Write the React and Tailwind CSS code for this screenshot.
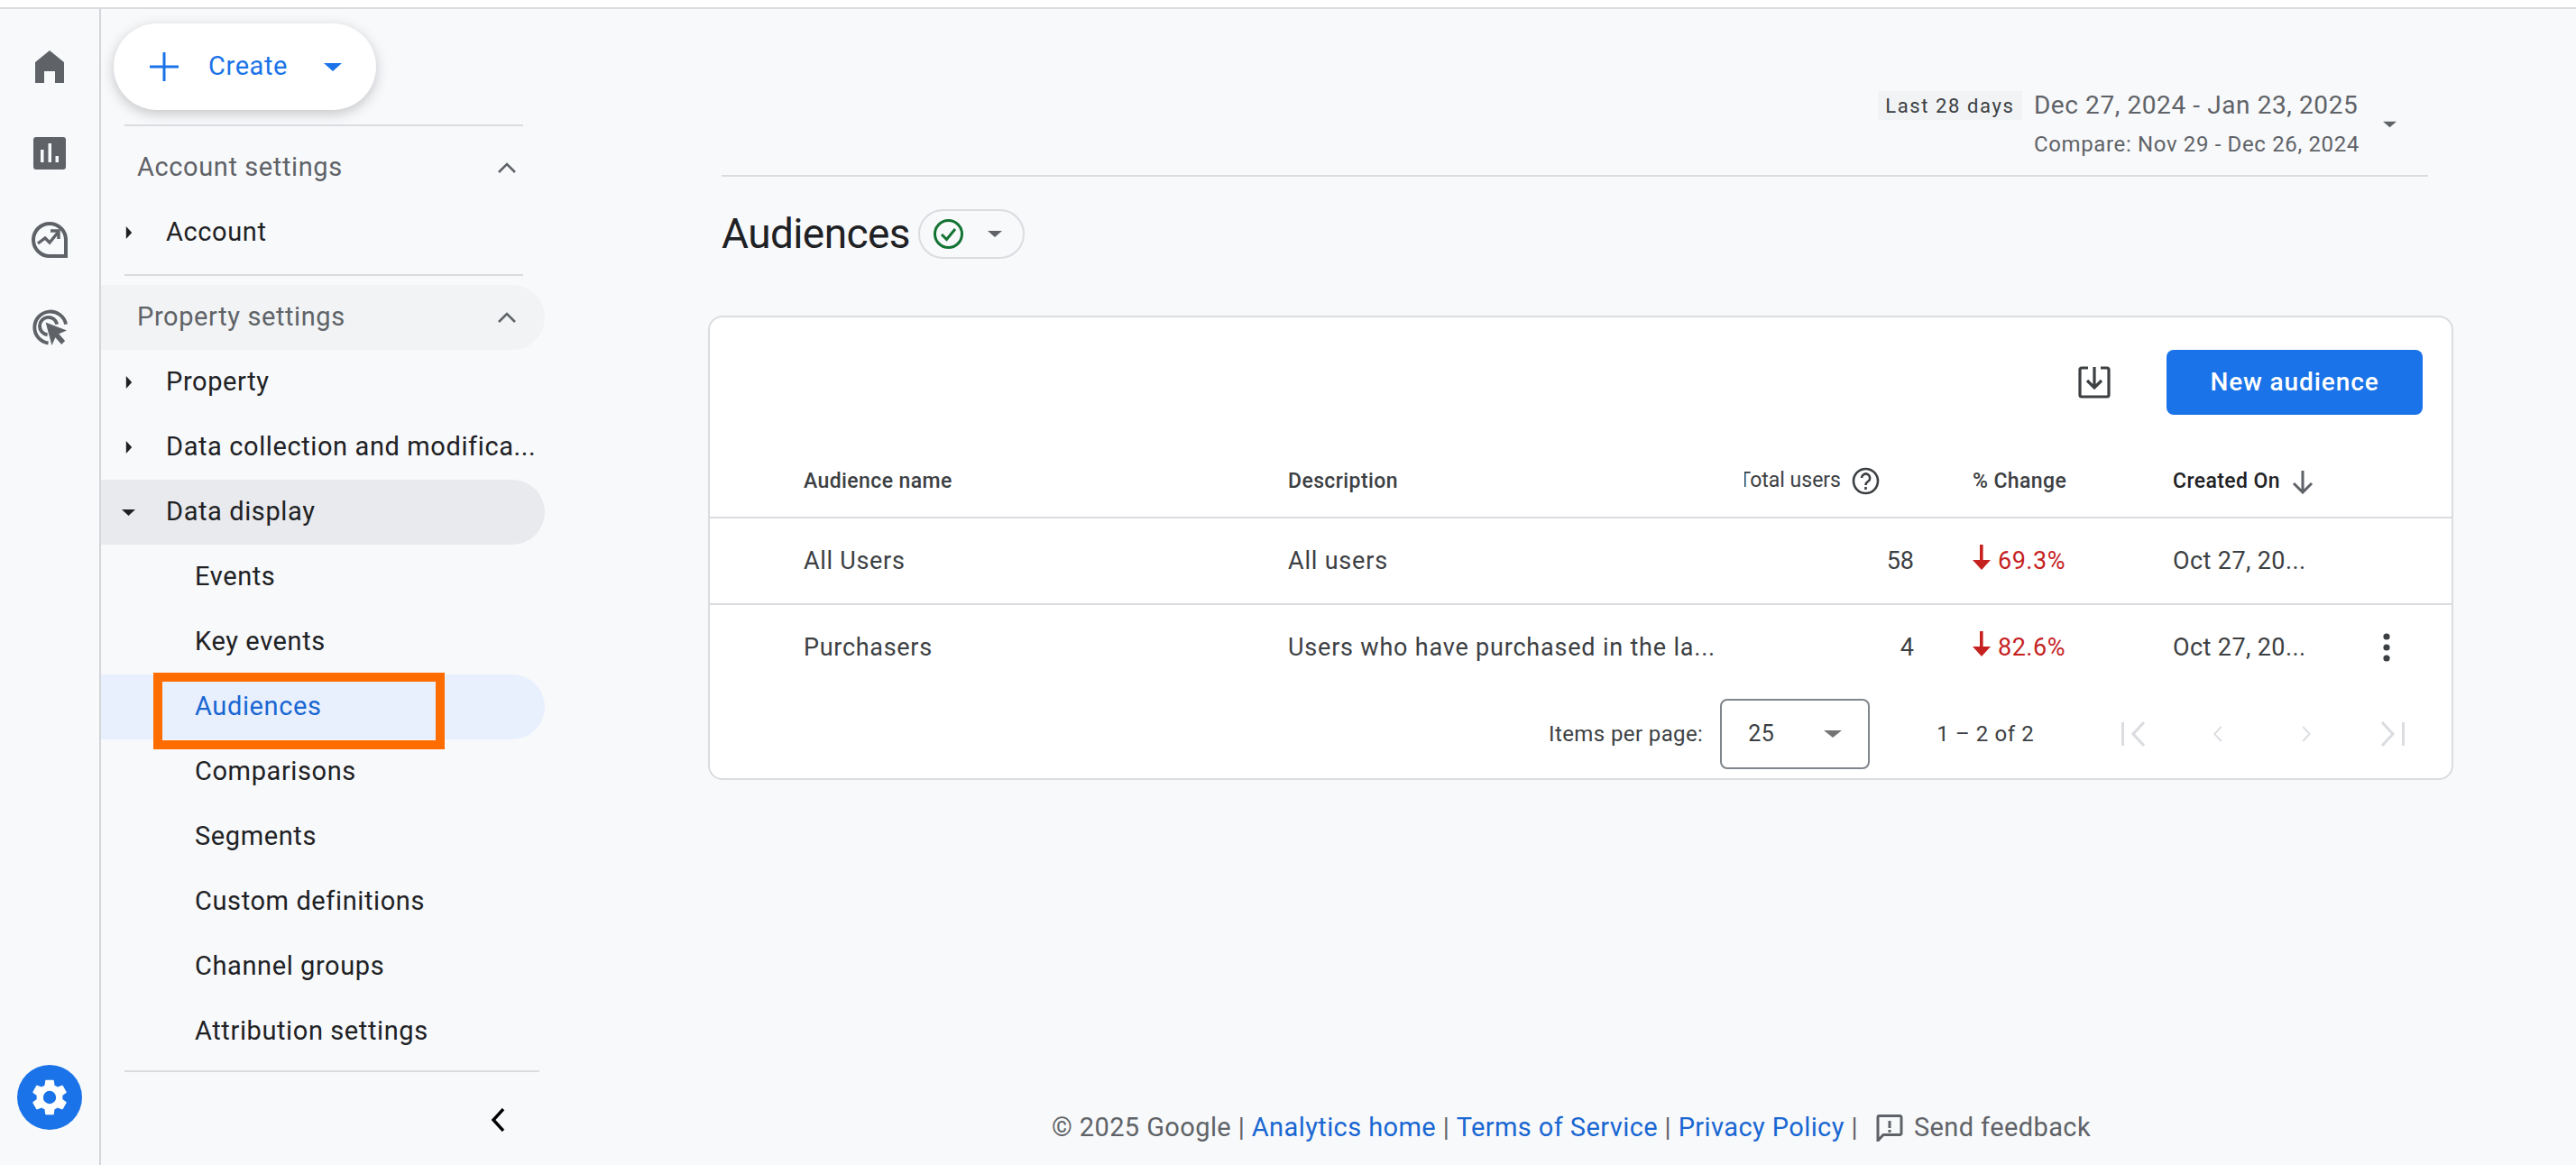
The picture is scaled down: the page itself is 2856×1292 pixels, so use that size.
import React from "react";

const Caret = ({ dir = "down", className = "" }) => (
  <svg viewBox="0 0 10 10" className={className} preserveAspectRatio="none" fill="currentColor">
    {dir === "down" ? <path d="M0 1h10L5 9z" /> : <path d="M1 0l8 5-8 5z" />}
  </svg>
);

const HomeIcon = () => (
  <svg viewBox="0 0 32 36" className="w-8 h-9 text-[#5f6368]" fill="currentColor">
    <path d="M0 36V13L16 0l16 13v23H22V23H10v13z" />
  </svg>
);
const ReportsIcon = () => (
  <svg viewBox="0 0 36 36" className="w-9 h-9 text-[#5f6368]" fill="currentColor">
    <path fillRule="evenodd" d="M3 0h30a3 3 0 0 1 3 3v30a3 3 0 0 1-3 3H3a3 3 0 0 1-3-3V3a3 3 0 0 1 3-3zM8 14v14h3.5V14zm8.5-7v21H20V7zm8 14v7H28v-7z" />
  </svg>
);
const ExploreIcon = () => (
  <svg viewBox="0 0 40 40" className="w-10 h-10 text-[#5f6368]" fill="none" stroke="currentColor">
    <path d="M38 24V20A18 18 0 1 0 20 38h18V24" strokeWidth="4" />
    <path d="M7 24l8-6 5 5 9-11" strokeWidth="3.4" />
    <path d="M21 10h9v9" strokeWidth="3.4" />
    <circle cx="34" cy="34" r="1.6" fill="#f8f9fb" stroke="none" />
  </svg>
);
const AdsIcon = () => (
  <svg viewBox="0 0 42 42" className="w-[41px] h-[41px] text-[#5f6368]" fill="none" stroke="currentColor">
    <path d="M19 39.5A18 18 0 1 1 39 18" strokeWidth="4" />
    <path d="M18 30a10 10 0 1 1 11-12" strokeWidth="4" />
    <path d="M16 16l24 9-9 4 7 8-4 4-7-8-4 9z" fill="currentColor" stroke="none" />
  </svg>
);
const Gear = () => (
  <svg viewBox="0 0 24 24" className="w-12 h-12 text-white" fill="currentColor">
    <path d="M19.14 12.94c.04-.3.06-.61.06-.94 0-.32-.02-.64-.07-.94l2.03-1.58a.49.49 0 0 0 .12-.61l-1.92-3.32a.49.49 0 0 0-.59-.22l-2.39.96c-.5-.38-1.03-.7-1.62-.94l-.36-2.54a.48.48 0 0 0-.48-.41h-3.84a.48.48 0 0 0-.47.41l-.36 2.54c-.59.24-1.13.57-1.62.94l-2.39-.96a.49.49 0 0 0-.59.22L2.74 8.87c-.12.21-.08.47.12.61l2.03 1.58c-.05.3-.09.63-.09.94s.02.64.07.94l-2.03 1.58a.49.49 0 0 0-.12.61l1.92 3.32c.12.22.37.29.59.22l2.39-.96c.5.38 1.03.7 1.62.94l.36 2.54c.05.24.24.41.48.41h3.84c.24 0 .44-.17.47-.41l.36-2.54c.59-.24 1.13-.56 1.62-.94l2.39.96c.22.08.47 0 .59-.22l1.92-3.32c.12-.22.07-.47-.12-.61l-2.01-1.58zM12 15.6A3.6 3.6 0 1 1 12 8.4a3.6 3.6 0 0 1 0 7.2z" />
  </svg>
);

const NavRow = ({ label, caret, sub, active, open, header, children }) => (
  <div
    className={
      "relative h-[72px] w-[492px] flex items-center rounded-r-[36px] text-[29px] tracking-[0.6px] " +
      (active ? "bg-[#e8f0fe] text-[#1967d2] " : open ? "bg-[#e8eaed] text-[#202124] " : header ? "text-[#5f6368] " : "text-[#202124] ")
    }
  >
    {caret === "right" && <Caret dir="right" className="absolute left-[27px] top-[29px] w-[8px] h-[14px] text-[#202124]" />}
    {caret === "down" && <Caret className="absolute left-[23px] top-[32px] w-[15px] h-[9px] text-[#202124]" />}
    <span className={"whitespace-nowrap " + (sub ? "ml-[104px]" : header ? "ml-[40px]" : "ml-[72px]")}>{label}</span>
    {children}
  </div>
);

const Chevron = () => (
  <svg viewBox="0 0 20 12" className="absolute left-[440px] top-[30px] w-5 h-3 text-[#5f6368]" fill="none" stroke="currentColor" strokeWidth="2.6">
    <path d="M1 11l9-9 9 9" />
  </svg>
);

const Rule = ({ className }) => <div className={"h-[2px] bg-[#dadce0] " + className} />;

const PageIcon = ({ d, className }) => (
  <svg viewBox="0 0 26 28" className={"h-7 text-[#dadce0] " + className} fill="none" stroke="currentColor" strokeWidth="3">
    <path d={d} />
  </svg>
);

const Cols = "grid grid-cols-[537px_506px_253px_222px_1fr] pl-[104px] items-center";

const Down = () => (
  <svg viewBox="0 0 20 28" className="w-5 h-7 text-[#c5221f]" fill="currentColor">
    <path d="M8 0h3.6v17H20L10 28 0 17h8z" />
  </svg>
);

const DataRow = ({ name, desc, total, pct, kebab, line }) => (
  <div className={Cols + " text-[27px] text-[#3c4043] " + (line ? "h-[96px] border-b-2 border-[#dadce0]" : "h-[94px]")}>
    <div className="tracking-[0.7px]">{name}</div>
    <div className="tracking-[0.8px] whitespace-nowrap">{desc}</div>
    <div className="w-[188px] text-right">{total}</div>
    <div className="flex items-center gap-[8px] text-[#c5221f]"><span className="-mt-[8px]"><Down /></span><span className="tracking-[0.5px]">{pct}</span></div>
    <div className="flex items-center">
      <span className="w-[146px] whitespace-nowrap tracking-[0.4px]">Oct 27, 20...</span>
      {kebab && (
        <svg viewBox="0 0 8 32" className="ml-[87px] w-2 h-8 text-[#3c4043]" fill="currentColor">
          <circle cx="4" cy="4" r="3.6" /><circle cx="4" cy="16" r="3.6" /><circle cx="4" cy="28" r="3.6" />
        </svg>
      )}
    </div>
  </div>
);

export default function App() {
  return (
    <div className="w-[2856px] h-[1292px] flex flex-col overflow-hidden bg-[#f8f9fb] [font-family:Roboto,sans-serif]">
      <div className="h-[10px] shrink-0 bg-white border-b-2 border-[#dadce0]" />
      <div className="flex-1 flex min-h-0">
        {/* Rail */}
        <div className="w-[112px] shrink-0 border-r-2 border-[#d3d5d9] flex flex-col items-center relative">
          <div className="mt-[46px]"><HomeIcon /></div>
          <div className="mt-[60px]"><ReportsIcon /></div>
          <div className="mt-[58px]"><ExploreIcon /></div>
          <div className="mt-[56px]"><AdsIcon /></div>
          <div className="mt-auto mb-[39px] w-[72px] h-[72px] rounded-full bg-[#1a73e8] flex items-center justify-center"><Gear /></div>
        </div>

        {/* Side nav */}
        <div className="w-[508px] shrink-0 flex flex-col">
          <div className="ml-[14px] mt-[16px] w-[291px] h-[96px] rounded-[48px] bg-white shadow-[0_4px_14px_rgba(60,64,67,0.28)] flex items-center text-[#1a73e8] relative z-10">
            <svg viewBox="0 0 32 32" className="ml-[40px] w-8 h-8" stroke="currentColor" strokeWidth="3"><path d="M16 0v32M0 16h32" /></svg>
            <span className="ml-[33px] text-[29px] tracking-[0.6px]">Create</span>
            <Caret className="ml-[40px] w-[20px] h-[11px]" />
          </div>
          <Rule className="ml-[26px] w-[442px] mt-[16px]" />
          <div className="mt-[10px]" />
          <NavRow label="Account settings" header><Chevron /></NavRow>
          <NavRow label="Account" caret="right" />
          <Rule className="ml-[26px] w-[442px] mt-[10px]" />
          <div className="mt-[10px]" />
          <div className="rounded-r-[36px] bg-[#f1f3f4] w-[492px]"><NavRow label="Property settings" header><Chevron /></NavRow></div>
          <NavRow label="Property" caret="right" />
          <NavRow label="Data collection and modifica..." caret="right" />
          <NavRow label="Data display" caret="down" open />
          <NavRow label="Events" sub />
          <NavRow label="Key events" sub />
          <NavRow label="Audiences" sub active>
            <div className="absolute left-[58px] -top-[2px] w-[323px] h-[85px] border-[10px] border-[#ff6d00]" />
          </NavRow>
          <NavRow label="Comparisons" sub />
          <NavRow label="Segments" sub />
          <NavRow label="Custom definitions" sub />
          <NavRow label="Channel groups" sub />
          <NavRow label="Attribution settings" sub />
          <Rule className="ml-[26px] w-[460px] mt-[7px]" />
          <div className="ml-[432px] mt-[40px]">
            <svg viewBox="0 0 16 26" className="w-4 h-[26px] text-black" fill="none" stroke="currentColor" strokeWidth="3.4"><path d="M14 1L3 13l11 12" /></svg>
          </div>
        </div>

        {/* Main */}
        <div className="flex-1 min-w-0 relative">
          <div className="ml-[180px] w-[1892px] h-[186px] border-b-2 border-[#dadce0] flex justify-end pt-[79px]">
            <div className="flex items-start">
              <span className="w-[160px] h-[32px] bg-[#f1f3f4] flex items-center justify-center text-[22px] tracking-[1.6px] text-[#3c4043] mt-[12px] whitespace-nowrap">Last 28 days</span>
              <div className="ml-[13px] flex flex-col">
                <span className="text-[28px] leading-[38px] mt-[9px] tracking-[0.6px] text-[#5f6368] whitespace-nowrap">Dec 27, 2024 - Jan 23, 2025</span>
                <span className="text-[24px] leading-[30px] mt-[9px] tracking-[0.65px] text-[#5f6368] whitespace-nowrap">Compare: Nov 29 - Dec 26, 2024</span>
              </div>
              <Caret className="ml-[26px] mt-[45px] w-[15px] h-[8px] text-[#5f6368]" />
              <div className="w-[35px]" />
            </div>
          </div>

          <div className="ml-[180px] mt-[35px] flex items-center h-[56px]">
            <h1 className="text-[46px] font-normal text-[#202124] leading-none tracking-[-0.6px]">Audiences</h1>
            <div className="ml-[9px] w-[118px] h-[55px] rounded-[28px] border-2 border-[#dadce0] flex items-center">
              <svg viewBox="0 0 33 33" className="ml-[15px] w-[33px] h-[33px] text-[#137333]" fill="none" stroke="currentColor" strokeWidth="3">
                <circle cx="16.5" cy="16.5" r="15" /><path d="M9 17l5.5 5.5L24 11" />
              </svg>
              <Caret className="ml-[27px] w-[16px] h-[9px] text-[#5f6368]" />
            </div>
          </div>

          <div className="ml-[165px] mt-[63px] w-[1935px] h-[515px] bg-white border-2 border-[#dadce0] rounded-[16px]">
            <div className="h-[108px] flex items-end justify-end pr-[32px]">
              <svg viewBox="0 0 36 36" className="mb-[18px] mr-[62px] w-9 h-9 text-[#3c4043]" fill="none" stroke="currentColor" strokeWidth="3.2">
                <path d="M11 2H4a2 2 0 0 0-2 2v28a2 2 0 0 0 2 2h28a2 2 0 0 0 2-2V4a2 2 0 0 0-2-2h-7" />
                <path d="M18 1v22M10 16l8 8 8-8" />
              </svg>
              <button className="w-[284px] h-[72px] rounded-[8px] bg-[#1a73e8] text-white text-[28px] font-medium tracking-[0.9px]">New audience</button>
            </div>
            <div className={Cols + " h-[115px] border-b-2 border-[#dadce0] text-[23px] font-medium tracking-[0.4px] text-[#3c4043] pt-[36px]"}>
              <div>Audience name</div>
              <div>Description</div>
              <div className="w-[150px] flex items-center justify-end overflow-hidden whitespace-nowrap font-normal tracking-normal gap-[12px] -mt-[3px]">
                <span className="shrink-0">Total users</span>
                <svg viewBox="0 0 31 31" className="w-[31px] h-[31px] shrink-0 text-[#3c4043]" fill="none" stroke="currentColor" strokeWidth="2.6">
                  <circle cx="15.5" cy="15.5" r="13.5" /><path d="M11 12a4.6 4.6 0 1 1 7 4c-1.7 1-2.5 2-2.5 4" /><path d="M15.5 22v3" />
                </svg>
              </div>
              <div>% Change</div>
              <div className="flex items-center gap-[13px] text-[#202124] whitespace-nowrap">
                <span className="w-[119px]">Created On</span>
                <svg viewBox="0 0 24 26" className="w-[24px] h-[26px] text-[#5f6368]" fill="none" stroke="currentColor" strokeWidth="3"><path d="M12 0v24M2 14l10 10 10-10" /></svg>
              </div>
            </div>
            <DataRow line name="All Users" desc="All users" total="58" pct="69.3%" />
            <DataRow name="Purchasers" desc="Users who have purchased in the la..." total="4" pct="82.6%" kebab />
            <div className="h-[96px] pt-[2px] flex items-center pl-[930px] text-[24px] tracking-[0.4px] text-[#3c4043]">
              <span className="whitespace-nowrap">Items per page:</span>
              <div className="ml-[19px] w-[166px] h-[78px] border-2 border-[#80868b] rounded-[8px] flex items-center text-[25px]">
                <span className="ml-[29px]">25</span>
                <Caret className="ml-[55px] w-[20px] h-[10px] text-[#757575]" />
              </div>
              <span className="ml-[74px] whitespace-nowrap tracking-[0.6px]">1 – 2 of 2</span>
              <PageIcon className="ml-[97px] w-[26px]" d="M1.5 1v26M25 1L13 14l12 13" />
              <PageIcon className="ml-[76px] w-[16px]" d="M14 1L2 14l12 13" />
              <PageIcon className="ml-[82px] w-[16px]" d="M2 1l12 13L2 27" />
              <PageIcon className="ml-[72px] w-[26px]" d="M24.5 1v26M1 1l12 13L1 27" />
            </div>
          </div>

          <div className="absolute left-[546px] top-[1221px] flex items-center text-[29px] h-[40px] text-[#5f6368] whitespace-nowrap tracking-[0.4px]">
            <span>© 2025 Google |&nbsp;</span>
            <span className="text-[#1967d2]">Analytics home</span>
            <span>&nbsp;|&nbsp;</span>
            <span className="text-[#1967d2]">Terms of Service</span>
            <span>&nbsp;|&nbsp;</span>
            <span className="text-[#1967d2]">Privacy Policy</span>
            <span>&nbsp;|</span>
            <svg viewBox="0 0 30 30" className="ml-[20px] w-[30px] h-[30px]" fill="none" stroke="currentColor" strokeWidth="3">
              <path d="M2 29V3a1.5 1.5 0 0 1 1.5-1.5h23A1.5 1.5 0 0 1 28 3v18a1.5 1.5 0 0 1-1.5 1.5H8z" />
              <path d="M15 7v8M15 17v3" />
            </svg>
            <span className="ml-[12px]">Send feedback</span>
          </div>
        </div>
      </div>
    </div>
  );
}
